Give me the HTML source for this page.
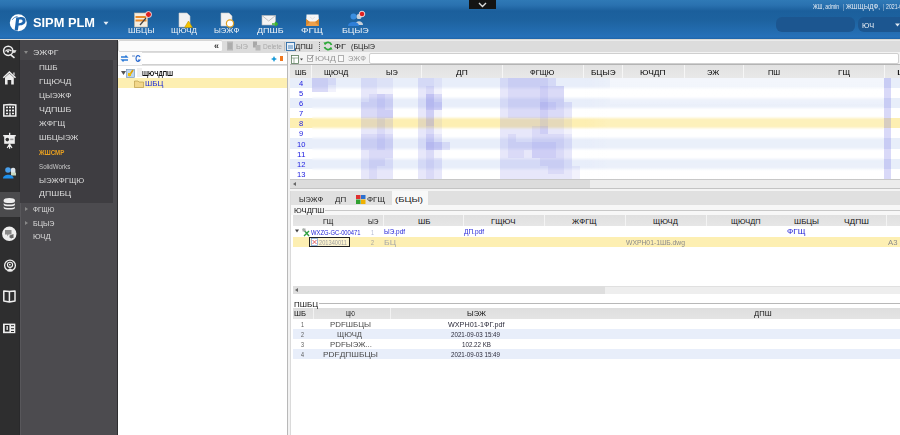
<!DOCTYPE html>
<html><head><meta charset="utf-8"><style>
html,body{margin:0;padding:0;width:900px;height:435px;overflow:hidden;background:#fff;font-family:"Liberation Sans", sans-serif;}
#root{position:relative;width:900px;height:435px;overflow:hidden;filter:blur(0.3px);}
</style></head><body><div id="root">
<div style="position:absolute;left:0px;top:0px;width:900px;height:39px;background:linear-gradient(to bottom,#2f79b6 0px,#2a72b0 5px,#1b5f9c 11px,#1d629f 20px,#226bae 30px,#2671b9 37px,#1f64a8 39px);"></div>
<div style="position:absolute;left:0px;top:39px;width:900px;height:1px;background:#dcdad4;"></div>
<div style="position:absolute;left:469px;top:0px;width:27px;height:9px;background:#141414;"></div>
<svg style="position:absolute;left:478px;top:2px" width="9" height="6" viewBox="0 0 9 6"><path d="M1 1 L4.5 4.5 L8 1" stroke="#ddd" stroke-width="1.4" fill="none"/></svg>
<svg style="position:absolute;left:9px;top:13px" width="19" height="19" viewBox="0 0 19 19"><circle cx="9.3" cy="9.7" r="8.5" fill="#fff"/><path d="M7.2 4.6 L10.4 4.2 C14 3.4 16.8 5 16.6 8 C16.4 11.2 13.4 12.6 9.6 12.4 L8.8 17.6 L5.6 17.4 Z" fill="#1f66ad"/><path d="M10.1 6.6 L9.7 10.2 C12 10.3 13.5 9.5 13.6 8.1 C13.7 6.7 12.2 6.2 10.1 6.6 Z" fill="#fff"/><path d="M3.2 6.8 C4.5 4.8 6.5 3.8 8.5 3.6" stroke="#1f66ad" stroke-width="0.8" fill="none"/></svg>
<svg style="position:absolute;left:103px;top:21px" width="6" height="5" viewBox="0 0 6 5"><path d="M0.5 0.8 L5.5 0.8 L3 4 Z" fill="#e6eef6"/></svg>
<svg style="position:absolute;left:133px;top:11px" width="20" height="17" viewBox="0 0 20 17"><rect x="1.5" y="2" width="13" height="14" fill="#f4ede0" stroke="#c9b9a0" stroke-width="0.6"/><rect x="2.5" y="5" width="11" height="2" fill="#e88a2a"/><rect x="2.5" y="8.5" width="11" height="2" fill="#e88a2a"/><path d="M7 14 L13 7" stroke="#444" stroke-width="1.2"/><circle cx="15.5" cy="3.5" r="3" fill="#e02020" stroke="#fff" stroke-width="0.8"/></svg>
<svg style="position:absolute;left:177px;top:12px" width="17" height="16" viewBox="0 0 17 16"><path d="M2 1 L10 1 L13 4 L13 15 L2 15 Z" fill="#f2f2f2" stroke="#c8c8c8" stroke-width="0.6"/><path d="M11.5 9 L15.5 15.5 L7.5 15.5 Z" fill="#f5c400" stroke="#b08a00" stroke-width="0.5"/></svg>
<svg style="position:absolute;left:220px;top:12px" width="16" height="16" viewBox="0 0 16 16"><path d="M1 1 L9 1 L12 4 L12 14 L1 14 Z" fill="#f2f2f2" stroke="#c8c8c8" stroke-width="0.6"/><circle cx="10" cy="11.5" r="3.6" fill="#fff" stroke="#e0a020" stroke-width="1.2"/></svg>
<svg style="position:absolute;left:261px;top:14px" width="17" height="13" viewBox="0 0 17 13"><rect x="1" y="1.5" width="13.5" height="9.5" fill="#f4f4f4" stroke="#bbb" stroke-width="0.6"/><path d="M1 1.5 L7.7 7 L14.5 1.5" stroke="#aaa" stroke-width="0.7" fill="none"/><path d="M11 10 L16 10 M14 8 L16.3 10 L14 12" stroke="#3cb030" stroke-width="1.6" fill="none"/></svg>
<svg style="position:absolute;left:304px;top:12px" width="17" height="15" viewBox="0 0 17 15"><path d="M2.5 2.5 L14.5 2.5 L15 10.5 L2 10.5 Z" fill="#f6f6f6"/><path d="M2 7 L5 9.5 L12 9.5 L15 7 L15 14 L2 14 Z" fill="#eea04a"/><path d="M2 7 L2 14 L6 10 Z M15 7 L15 14 L11 10 Z" fill="#d88a30"/><path d="M6 5 L8.5 7 L11 5" stroke="#ddd" stroke-width="0.8" fill="none"/></svg>
<svg style="position:absolute;left:347px;top:10px" width="20" height="17" viewBox="0 0 20 17"><circle cx="12" cy="6.5" r="2.6" fill="#c8d0d8"/><path d="M8 15 C8 10 16 10 16 15 Z" fill="#c8d0d8"/><circle cx="6.5" cy="6.5" r="3" fill="#3a8ee0"/><path d="M1 16 C1 10.5 12 10.5 12 16 Z" fill="#2f7fd8"/><circle cx="15" cy="4" r="2.8" fill="#e02020" stroke="#fff" stroke-width="0.8"/></svg>
<div style="position:absolute;left:776px;top:17px;width:79px;height:15px;background:#1c5690;border-radius:6px;"></div>
<div style="position:absolute;left:858px;top:17px;width:50px;height:15px;background:#1c5690;border-radius:6px;"></div>
<svg style="position:absolute;left:895px;top:23px" width="5" height="4" viewBox="0 0 5 4"><path d="M0 0.5 L5 0.5 L2.5 3.5 Z" fill="#dfe8f0"/></svg>
<div style="position:absolute;left:0px;top:40px;width:20px;height:395px;background:#2e2e2f;"></div>
<div style="position:absolute;left:19px;top:40px;width:1px;height:395px;background:#29292b;"></div>
<div style="position:absolute;left:0px;top:192px;width:20px;height:25px;background:#4b4b4d;"></div>
<div style="position:absolute;left:20px;top:40px;width:98px;height:395px;background:#4c4b4f;"></div>
<div style="position:absolute;left:20px;top:203px;width:1px;height:232px;background:#58575b;"></div>
<div style="position:absolute;left:20px;top:40px;width:97px;height:20px;background:#47464a;"></div>
<div style="position:absolute;left:20px;top:60px;width:93px;height:143px;background:#3e3d41;"></div>
<div style="position:absolute;left:117px;top:40px;width:1px;height:395px;background:#2e2e30;"></div>
<svg style="position:absolute;left:0px;top:42px" width="20" height="20" viewBox="0 0 20 20"><circle cx="8.2" cy="8.8" r="4.6" fill="none" stroke="#eee" stroke-width="1.5"/><path d="M5.5 9.5 C6.5 7.5 9.5 7.5 11.5 9" stroke="#eee" stroke-width="1.3" fill="none"/><circle cx="8" cy="9.6" r="1.1" fill="#eee"/><path d="M12 8 L16.5 8.2 L15.2 10.8 L12 11" fill="#ddd"/><path d="M10.8 12.8 L14.5 15.8" stroke="#eee" stroke-width="1.6"/></svg>
<svg style="position:absolute;left:0px;top:68px" width="20" height="20" viewBox="0 0 20 20"><path d="M3.3 9.8 L9.4 4 L15.5 9.8" stroke="#eee" stroke-width="1.5" fill="none"/><path d="M5 9.5 L9.4 5.6 L13.8 9.5 L13.8 16.4 L11.2 16.4 L11.2 12 L7.6 12 L7.6 16.4 L5 16.4 Z" fill="#eee"/><path d="M13.3 4.5 L14.6 4.5 L14.6 7.6 L13.3 6.5 Z" fill="#ddd"/></svg>
<svg style="position:absolute;left:0px;top:100px" width="20" height="20" viewBox="0 0 20 20"><path d="M3.8 5 L9.8 4.4 L15.8 5 L15.8 16 L3.8 16 Z" fill="none" stroke="#eee" stroke-width="1.5"/><rect x="6" y="6.6" width="2" height="1.6" fill="#eee"/><rect x="9" y="6.6" width="2" height="1.6" fill="#eee"/><rect x="12" y="6.6" width="2" height="1.6" fill="#eee"/><rect x="6" y="9.6" width="2" height="1.8" fill="#eee"/><rect x="9" y="9.6" width="2" height="1.8" fill="#eee"/><rect x="12" y="9.6" width="2" height="1.8" fill="#eee"/><rect x="6" y="12.8" width="2" height="1.4" fill="#eee"/><rect x="12" y="12.8" width="2" height="1.4" fill="#eee"/><rect x="9.3" y="12.5" width="1.4" height="3.5" fill="#eee"/></svg>
<svg style="position:absolute;left:0px;top:130px" width="20" height="20" viewBox="0 0 20 20"><rect x="9" y="2.8" width="1.3" height="2.4" fill="#eee"/><rect x="3.2" y="5" width="12.6" height="1.4" fill="#eee"/><rect x="4.2" y="6" width="10.6" height="7.8" fill="#eee"/><circle cx="7.3" cy="9.6" r="1.8" fill="#333"/><rect x="10.2" y="8.6" width="3.2" height="1.6" fill="#999"/><path d="M9.6 13.6 L9.6 18.8 M9.6 14 L7.2 18 M9.6 14 L12 18" stroke="#eee" stroke-width="1.2"/></svg>
<svg style="position:absolute;left:0px;top:162px" width="20" height="20" viewBox="0 0 20 20"><rect x="10.8" y="5.8" width="4.6" height="6" rx="2" fill="#dde4ea"/><path d="M11 10.5 L16 10.5 L16 13.5 L11 13.5 Z" fill="#c8d8c0"/><circle cx="8" cy="8" r="2.8" fill="#4aa0ec"/><path d="M3 16.5 C3 11.5 13.5 11.5 13.5 16.5 Z" fill="#1e90ec"/></svg>
<svg style="position:absolute;left:0px;top:191px" width="20" height="25" viewBox="0 0 20 25"><ellipse cx="9.3" cy="9" rx="5.6" ry="2" fill="#eee"/><path d="M3.7 9 L3.7 10.4 C3.7 12.4 14.9 12.4 14.9 10.4 L14.9 9 Z" fill="#eee"/><path d="M3.7 12 C3.7 14 14.9 14 14.9 12 L14.9 13.8 C14.9 15.8 3.7 15.8 3.7 13.8 Z" fill="#eee"/><path d="M3.7 15.4 C3.7 17.4 14.9 17.4 14.9 15.4 L14.9 17 C14.9 19 3.7 19 3.7 17 Z" fill="#eee"/></svg>
<svg style="position:absolute;left:0px;top:225px" width="20" height="20" viewBox="0 0 20 20"><circle cx="9.3" cy="8.8" r="7.2" fill="#eee"/><path d="M5 5 L11.5 5 L11.5 9.5 L8.5 9.5 L7.5 11.5 L7.2 9.5 L5 9.5 Z" fill="#8a8a8a"/><path d="M9.5 10.5 L13.5 9 L13.5 13 L11.5 13 L11.5 14 L10.5 13 L9.5 12.5 Z" fill="#666"/></svg>
<svg style="position:absolute;left:0px;top:256px" width="20" height="20" viewBox="0 0 20 20"><circle cx="10" cy="9.5" r="5.4" fill="none" stroke="#eee" stroke-width="1.3"/><circle cx="10" cy="8.8" r="2.6" fill="none" stroke="#eee" stroke-width="1.1"/><circle cx="9.8" cy="8.6" r="0.9" fill="#eee"/><path d="M7.5 15.5 C7.5 11.5 12.5 11.5 12.5 15.5 Z" fill="#eee"/></svg>
<svg style="position:absolute;left:0px;top:286px" width="20" height="20" viewBox="0 0 20 20"><path d="M3.8 5 L9.4 5.6 L9.4 16 L3.8 15 Z M15 5 L9.4 5.6 L9.4 16 L15 15 Z" fill="none" stroke="#eee" stroke-width="1.5" stroke-linejoin="round"/></svg>
<svg style="position:absolute;left:0px;top:318px" width="20" height="20" viewBox="0 0 20 20"><rect x="3" y="5.6" width="12.3" height="9.6" fill="#eee"/><rect x="4.8" y="7" width="4.6" height="6.6" fill="#2a2a2b"/><rect x="6.4" y="8" width="1.6" height="4" fill="#ccc"/><rect x="11" y="7.2" width="3" height="1" fill="#2a2a2b"/><rect x="11" y="10.2" width="3" height="1" fill="#2a2a2b"/><rect x="11" y="13" width="3" height="1" fill="#2a2a2b"/></svg>
<svg style="position:absolute;left:24px;top:51px" width="4" height="3" viewBox="0 0 4 3"><path d="M0 0 L4 0 L2 3 Z" fill="#888"/></svg>
<svg style="position:absolute;left:25px;top:207px" width="3" height="4" viewBox="0 0 3 4"><path d="M0 0 L3 2 L0 4 Z" fill="#888"/></svg>
<svg style="position:absolute;left:25px;top:221px" width="3" height="4" viewBox="0 0 3 4"><path d="M0 0 L3 2 L0 4 Z" fill="#888"/></svg>
<div style="position:absolute;left:118px;top:40px;width:170px;height:395px;background:#ffffff;"></div>
<div style="position:absolute;left:118px;top:40px;width:105px;height:12px;background:#fbfbfb;border:1px solid #d6d6d6;border-radius:2px;box-sizing:border-box;"></div>
<div style="position:absolute;left:118px;top:52px;width:170px;height:13px;background:#fbfbfb;"></div>
<svg style="position:absolute;left:120px;top:54px" width="9" height="9" viewBox="0 0 9 9"><path d="M1 3 H7 L5.5 1.5 M8 6 H2 L3.5 7.5" stroke="#2a7ad8" stroke-width="1.3" fill="none"/></svg>
<svg style="position:absolute;left:131px;top:54px" width="10" height="9" viewBox="0 0 10 9"><path d="M1 2 H4" stroke="#6a8fc8" stroke-width="1"/><path d="M9 3 C8 1 5 1 5 4.5 C5 8 8 8 9 6 L7 6" stroke="#2a6ad0" stroke-width="1.2" fill="none"/></svg>
<div style="position:absolute;left:142px;top:52px;width:145px;height:13px;background:#fff;border-top:1px solid #dcdcdc;border-bottom:1px solid #d0d0d0;box-sizing:border-box;"></div>
<svg style="position:absolute;left:271px;top:56px" width="6" height="6" viewBox="0 0 6 6"><path d="M3 0 L4 2 L6 3 L4 4 L3 6 L2 4 L0 3 L2 2 Z" fill="#1a9ad8"/></svg>
<div style="position:absolute;left:280px;top:56px;width:3px;height:5px;background:#f07820;"></div>
<div style="position:absolute;left:118px;top:65px;width:170px;height:1px;background:#e0e0e0;"></div>
<svg style="position:absolute;left:121px;top:71px" width="5" height="4" viewBox="0 0 5 4"><path d="M0 0 L5 0 L2.5 4 Z" fill="#555"/></svg>
<svg style="position:absolute;left:126px;top:68px" width="10" height="10" viewBox="0 0 10 10"><rect x="0.5" y="1.5" width="8" height="8" fill="#bcd4ec" stroke="#6a8cb0" stroke-width="0.6"/><path d="M3 8 L7 2" stroke="#e0a000" stroke-width="1.6"/><rect x="2" y="5" width="3" height="3" fill="#f0c000"/></svg>
<div style="position:absolute;left:137px;top:68px;width:5px;height:9px;background:#f0f0f0;"></div>
<div style="position:absolute;left:118px;top:78px;width:170px;height:10px;background:#fdefb2;"></div>
<svg style="position:absolute;left:134px;top:79px" width="10" height="9" viewBox="0 0 10 9"><path d="M0.5 2 L4 2 L5 3 L9.5 3 L9.5 8.5 L0.5 8.5 Z" fill="#f2d78a" stroke="#b0903a" stroke-width="0.6"/></svg>
<div style="position:absolute;left:287px;top:40px;width:1px;height:395px;background:#b8b8b8;"></div>
<div style="position:absolute;left:288px;top:40px;width:2px;height:395px;background:#f2f2f2;"></div>
<div style="position:absolute;left:222px;top:40px;width:678px;height:12px;background:#dcdcdc;border-top:1px solid #ebebeb;box-sizing:border-box;"></div>
<svg style="position:absolute;left:226px;top:41px" width="8" height="10" viewBox="0 0 8 10"><rect x="1" y="0.5" width="6" height="9" fill="#b8b8b8"/><path d="M2 3 H6 M2 5 H6 M2 7 H6" stroke="#9a9a9a" stroke-width="0.7"/></svg>
<svg style="position:absolute;left:252px;top:41px" width="9" height="10" viewBox="0 0 9 10"><rect x="1" y="0.5" width="4" height="6" fill="#a8a8a8"/><rect x="3.5" y="4" width="5" height="5.5" fill="#b8b8b8"/></svg>
<div style="position:absolute;left:284px;top:42px;width:1px;height:9px;background:#bfbfbf;"></div>
<svg style="position:absolute;left:286px;top:42px" width="9" height="9" viewBox="0 0 9 9"><rect x="0.5" y="0.5" width="8" height="8" fill="#e8f0f8" stroke="#2a6aa8" stroke-width="0.9"/><path d="M2 4 H7 M2 6 H7" stroke="#2a6aa8" stroke-width="0.8"/></svg>
<div style="position:absolute;left:319px;top:42px;width:1px;height:1px;background:#666;"></div>
<div style="position:absolute;left:319px;top:44px;width:1px;height:1px;background:#666;"></div>
<div style="position:absolute;left:319px;top:46px;width:1px;height:1px;background:#666;"></div>
<div style="position:absolute;left:319px;top:48px;width:1px;height:1px;background:#666;"></div>
<div style="position:absolute;left:319px;top:50px;width:1px;height:1px;background:#666;"></div>
<svg style="position:absolute;left:323px;top:41px" width="10" height="10" viewBox="0 0 10 10"><path d="M8.5 4 A3.8 3.8 0 0 0 1.8 3" stroke="#2ea83a" stroke-width="1.8" fill="none"/><path d="M1.5 6 A3.8 3.8 0 0 0 8.2 7" stroke="#2ea83a" stroke-width="1.8" fill="none"/><path d="M0.5 1 L1.8 4 L4 2.5 Z M9.5 9 L8.2 6 L6 7.5 Z" fill="#2ea83a"/></svg>
<div style="position:absolute;left:290px;top:52px;width:610px;height:13px;background:#f3f3f3;"></div>
<svg style="position:absolute;left:291px;top:55px" width="13" height="9" viewBox="0 0 13 9"><rect x="0.5" y="0.5" width="7" height="8" fill="#fff" stroke="#5a7a5a" stroke-width="0.8"/><path d="M0.5 3 H7.5 M3 3 V8.5" stroke="#5a7a5a" stroke-width="0.6"/><path d="M9 3.5 L12 3.5 L10.5 5.5 Z" fill="#444"/></svg>
<div style="position:absolute;left:307px;top:55px;width:6px;height:7px;background:#fafafa;border:1px solid #b0b0b0;box-sizing:border-box;"></div>
<svg style="position:absolute;left:307px;top:54px" width="7" height="7" viewBox="0 0 7 7"><path d="M1 3.5 L3 5.5 L6.5 1" stroke="#888" stroke-width="0.9" fill="none"/></svg>
<div style="position:absolute;left:338px;top:55px;width:6px;height:7px;background:#fafafa;border:1px solid #b0b0b0;box-sizing:border-box;"></div>
<div style="position:absolute;left:369px;top:53px;width:530px;height:11px;background:#fff;border:1px solid #cfcfcf;border-radius:2px;box-sizing:border-box;"></div>
<div style="position:absolute;left:290px;top:64px;width:610px;height:1px;background:#b4b4b4;"></div>
<div style="position:absolute;left:290px;top:65px;width:610px;height:13px;background:linear-gradient(to bottom,#e2e2e2,#e8e8e8);"></div>
<div style="position:absolute;left:311px;top:65px;width:1px;height:13px;background:#f6f6f6;"></div>
<div style="position:absolute;left:421px;top:65px;width:1px;height:13px;background:#f6f6f6;"></div>
<div style="position:absolute;left:502px;top:65px;width:1px;height:13px;background:#f6f6f6;"></div>
<div style="position:absolute;left:583px;top:65px;width:1px;height:13px;background:#f6f6f6;"></div>
<div style="position:absolute;left:622px;top:65px;width:1px;height:13px;background:#f6f6f6;"></div>
<div style="position:absolute;left:684px;top:65px;width:1px;height:13px;background:#f6f6f6;"></div>
<div style="position:absolute;left:743px;top:65px;width:1px;height:13px;background:#f6f6f6;"></div>
<div style="position:absolute;left:884px;top:65px;width:1px;height:13px;background:#f6f6f6;"></div>
<div style="position:absolute;left:290px;top:78px;width:610px;height:10px;background:#e8eefa;"></div>
<div style="position:absolute;left:290px;top:88px;width:610px;height:10px;background:#ffffff;"></div>
<div style="position:absolute;left:290px;top:98px;width:610px;height:10px;background:#e8eefa;"></div>
<div style="position:absolute;left:290px;top:108px;width:610px;height:10px;background:#ffffff;"></div>
<div style="position:absolute;left:290px;top:118px;width:610px;height:10px;background:#fdefb2;"></div>
<div style="position:absolute;left:290px;top:128px;width:610px;height:10px;background:#ffffff;"></div>
<div style="position:absolute;left:290px;top:138px;width:610px;height:11px;background:#e8eefa;"></div>
<div style="position:absolute;left:290px;top:149px;width:610px;height:10px;background:#ffffff;"></div>
<div style="position:absolute;left:290px;top:159px;width:610px;height:10px;background:#e8eefa;"></div>
<div style="position:absolute;left:290px;top:169px;width:610px;height:10px;background:#ffffff;"></div>
<div style="position:absolute;left:312px;top:78px;width:572px;height:101px;backdrop-filter:blur(1.2px);-webkit-backdrop-filter:blur(1.2px);"></div>
<div style="position:absolute;left:610px;top:78px;width:274px;height:101px;background:linear-gradient(to bottom,rgba(255,255,255,.5) 0px,rgba(255,255,255,.4) 18px,rgba(255,255,255,.12) 28px,rgba(255,255,255,.12) 85px,rgba(255,255,255,.3) 101px);"></div>
<div style="position:absolute;left:585px;top:78px;width:25px;height:101px;background:linear-gradient(to right,rgba(255,255,255,0),rgba(255,255,255,.15));"></div>
<div style="position:absolute;left:312px;top:78px;width:8px;height:7px;background:rgba(110,110,225,0.255);"></div>
<div style="position:absolute;left:320px;top:78px;width:8px;height:7px;background:rgba(110,110,225,0.255);"></div>
<div style="position:absolute;left:328px;top:78px;width:8px;height:7px;background:rgba(110,110,225,0.170);"></div>
<div style="position:absolute;left:312px;top:85px;width:8px;height:7px;background:rgba(110,110,225,0.255);"></div>
<div style="position:absolute;left:320px;top:85px;width:8px;height:7px;background:rgba(110,110,225,0.255);"></div>
<div style="position:absolute;left:328px;top:85px;width:8px;height:7px;background:rgba(110,110,225,0.085);"></div>
<div style="position:absolute;left:361px;top:78px;width:8px;height:8px;background:rgba(110,110,225,0.170);"></div>
<div style="position:absolute;left:369px;top:78px;width:8px;height:8px;background:rgba(110,110,225,0.170);"></div>
<div style="position:absolute;left:377px;top:78px;width:8px;height:8px;background:rgba(110,110,225,0.085);"></div>
<div style="position:absolute;left:385px;top:78px;width:8px;height:8px;background:rgba(110,110,225,0.085);"></div>
<div style="position:absolute;left:361px;top:86px;width:8px;height:8px;background:rgba(110,110,225,0.170);"></div>
<div style="position:absolute;left:369px;top:86px;width:8px;height:8px;background:rgba(110,110,225,0.170);"></div>
<div style="position:absolute;left:377px;top:86px;width:8px;height:8px;background:rgba(110,110,225,0.085);"></div>
<div style="position:absolute;left:385px;top:86px;width:8px;height:8px;background:rgba(110,110,225,0.085);"></div>
<div style="position:absolute;left:361px;top:94px;width:8px;height:8px;background:rgba(110,110,225,0.170);"></div>
<div style="position:absolute;left:369px;top:94px;width:8px;height:8px;background:rgba(110,110,225,0.255);"></div>
<div style="position:absolute;left:377px;top:94px;width:8px;height:8px;background:rgba(110,110,225,0.340);"></div>
<div style="position:absolute;left:385px;top:94px;width:8px;height:8px;background:rgba(110,110,225,0.255);"></div>
<div style="position:absolute;left:361px;top:102px;width:8px;height:8px;background:rgba(110,110,225,0.255);"></div>
<div style="position:absolute;left:369px;top:102px;width:8px;height:8px;background:rgba(110,110,225,0.255);"></div>
<div style="position:absolute;left:377px;top:102px;width:8px;height:8px;background:rgba(110,110,225,0.340);"></div>
<div style="position:absolute;left:385px;top:102px;width:8px;height:8px;background:rgba(110,110,225,0.255);"></div>
<div style="position:absolute;left:361px;top:110px;width:8px;height:8px;background:rgba(110,110,225,0.255);"></div>
<div style="position:absolute;left:369px;top:110px;width:8px;height:8px;background:rgba(110,110,225,0.255);"></div>
<div style="position:absolute;left:377px;top:110px;width:8px;height:8px;background:rgba(110,110,225,0.340);"></div>
<div style="position:absolute;left:385px;top:110px;width:8px;height:8px;background:rgba(110,110,225,0.340);"></div>
<div style="position:absolute;left:361px;top:118px;width:8px;height:8px;background:rgba(110,110,225,0.170);"></div>
<div style="position:absolute;left:369px;top:118px;width:8px;height:8px;background:rgba(110,110,225,0.170);"></div>
<div style="position:absolute;left:377px;top:118px;width:8px;height:8px;background:rgba(110,110,225,0.255);"></div>
<div style="position:absolute;left:385px;top:118px;width:8px;height:8px;background:rgba(110,110,225,0.170);"></div>
<div style="position:absolute;left:361px;top:126px;width:8px;height:8px;background:rgba(110,110,225,0.170);"></div>
<div style="position:absolute;left:369px;top:126px;width:8px;height:8px;background:rgba(110,110,225,0.170);"></div>
<div style="position:absolute;left:377px;top:126px;width:8px;height:8px;background:rgba(110,110,225,0.255);"></div>
<div style="position:absolute;left:385px;top:126px;width:8px;height:8px;background:rgba(110,110,225,0.170);"></div>
<div style="position:absolute;left:361px;top:134px;width:8px;height:8px;background:rgba(110,110,225,0.255);"></div>
<div style="position:absolute;left:369px;top:134px;width:8px;height:8px;background:rgba(110,110,225,0.255);"></div>
<div style="position:absolute;left:377px;top:134px;width:8px;height:8px;background:rgba(110,110,225,0.340);"></div>
<div style="position:absolute;left:385px;top:134px;width:8px;height:8px;background:rgba(110,110,225,0.255);"></div>
<div style="position:absolute;left:361px;top:142px;width:8px;height:8px;background:rgba(110,110,225,0.255);"></div>
<div style="position:absolute;left:369px;top:142px;width:8px;height:8px;background:rgba(110,110,225,0.255);"></div>
<div style="position:absolute;left:377px;top:142px;width:8px;height:8px;background:rgba(110,110,225,0.340);"></div>
<div style="position:absolute;left:385px;top:142px;width:8px;height:8px;background:rgba(110,110,225,0.255);"></div>
<div style="position:absolute;left:361px;top:150px;width:8px;height:8px;background:rgba(110,110,225,0.170);"></div>
<div style="position:absolute;left:369px;top:150px;width:8px;height:8px;background:rgba(110,110,225,0.255);"></div>
<div style="position:absolute;left:377px;top:150px;width:8px;height:8px;background:rgba(110,110,225,0.255);"></div>
<div style="position:absolute;left:385px;top:150px;width:8px;height:8px;background:rgba(110,110,225,0.255);"></div>
<div style="position:absolute;left:361px;top:158px;width:8px;height:8px;background:rgba(110,110,225,0.170);"></div>
<div style="position:absolute;left:369px;top:158px;width:8px;height:8px;background:rgba(110,110,225,0.255);"></div>
<div style="position:absolute;left:377px;top:158px;width:8px;height:8px;background:rgba(110,110,225,0.255);"></div>
<div style="position:absolute;left:385px;top:158px;width:8px;height:8px;background:rgba(110,110,225,0.170);"></div>
<div style="position:absolute;left:361px;top:166px;width:8px;height:8px;background:rgba(110,110,225,0.170);"></div>
<div style="position:absolute;left:369px;top:166px;width:8px;height:8px;background:rgba(110,110,225,0.255);"></div>
<div style="position:absolute;left:377px;top:166px;width:8px;height:8px;background:rgba(110,110,225,0.170);"></div>
<div style="position:absolute;left:385px;top:166px;width:8px;height:8px;background:rgba(110,110,225,0.170);"></div>
<div style="position:absolute;left:361px;top:174px;width:8px;height:5px;background:rgba(110,110,225,0.170);"></div>
<div style="position:absolute;left:369px;top:174px;width:8px;height:5px;background:rgba(110,110,225,0.255);"></div>
<div style="position:absolute;left:377px;top:174px;width:8px;height:5px;background:rgba(110,110,225,0.170);"></div>
<div style="position:absolute;left:385px;top:174px;width:8px;height:5px;background:rgba(110,110,225,0.170);"></div>
<div style="position:absolute;left:418px;top:78px;width:8px;height:8px;background:rgba(110,110,225,0.170);"></div>
<div style="position:absolute;left:426px;top:78px;width:8px;height:8px;background:rgba(110,110,225,0.170);"></div>
<div style="position:absolute;left:434px;top:78px;width:8px;height:8px;background:rgba(110,110,225,0.085);"></div>
<div style="position:absolute;left:418px;top:86px;width:8px;height:8px;background:rgba(110,110,225,0.170);"></div>
<div style="position:absolute;left:426px;top:86px;width:8px;height:8px;background:rgba(110,110,225,0.255);"></div>
<div style="position:absolute;left:434px;top:86px;width:8px;height:8px;background:rgba(110,110,225,0.085);"></div>
<div style="position:absolute;left:418px;top:94px;width:8px;height:8px;background:rgba(110,110,225,0.170);"></div>
<div style="position:absolute;left:426px;top:94px;width:8px;height:8px;background:rgba(110,110,225,0.425);"></div>
<div style="position:absolute;left:434px;top:94px;width:8px;height:8px;background:rgba(110,110,225,0.255);"></div>
<div style="position:absolute;left:418px;top:102px;width:8px;height:8px;background:rgba(110,110,225,0.170);"></div>
<div style="position:absolute;left:426px;top:102px;width:8px;height:8px;background:rgba(110,110,225,0.425);"></div>
<div style="position:absolute;left:434px;top:102px;width:8px;height:8px;background:rgba(110,110,225,0.340);"></div>
<div style="position:absolute;left:418px;top:110px;width:8px;height:8px;background:rgba(110,110,225,0.170);"></div>
<div style="position:absolute;left:426px;top:110px;width:8px;height:8px;background:rgba(110,110,225,0.340);"></div>
<div style="position:absolute;left:434px;top:110px;width:8px;height:8px;background:rgba(110,110,225,0.085);"></div>
<div style="position:absolute;left:418px;top:118px;width:8px;height:8px;background:rgba(110,110,225,0.170);"></div>
<div style="position:absolute;left:426px;top:118px;width:8px;height:8px;background:rgba(110,110,225,0.340);"></div>
<div style="position:absolute;left:434px;top:118px;width:8px;height:8px;background:rgba(110,110,225,0.085);"></div>
<div style="position:absolute;left:418px;top:126px;width:8px;height:8px;background:rgba(110,110,225,0.170);"></div>
<div style="position:absolute;left:426px;top:126px;width:8px;height:8px;background:rgba(110,110,225,0.255);"></div>
<div style="position:absolute;left:434px;top:126px;width:8px;height:8px;background:rgba(110,110,225,0.085);"></div>
<div style="position:absolute;left:418px;top:134px;width:8px;height:8px;background:rgba(110,110,225,0.170);"></div>
<div style="position:absolute;left:426px;top:134px;width:8px;height:8px;background:rgba(110,110,225,0.340);"></div>
<div style="position:absolute;left:434px;top:134px;width:8px;height:8px;background:rgba(110,110,225,0.170);"></div>
<div style="position:absolute;left:418px;top:142px;width:8px;height:8px;background:rgba(110,110,225,0.170);"></div>
<div style="position:absolute;left:426px;top:142px;width:8px;height:8px;background:rgba(110,110,225,0.425);"></div>
<div style="position:absolute;left:434px;top:142px;width:8px;height:8px;background:rgba(110,110,225,0.340);"></div>
<div style="position:absolute;left:442px;top:142px;width:8px;height:8px;background:rgba(110,110,225,0.170);"></div>
<div style="position:absolute;left:418px;top:150px;width:8px;height:8px;background:rgba(110,110,225,0.170);"></div>
<div style="position:absolute;left:426px;top:150px;width:8px;height:8px;background:rgba(110,110,225,0.255);"></div>
<div style="position:absolute;left:434px;top:150px;width:8px;height:8px;background:rgba(110,110,225,0.085);"></div>
<div style="position:absolute;left:418px;top:158px;width:8px;height:8px;background:rgba(110,110,225,0.170);"></div>
<div style="position:absolute;left:426px;top:158px;width:8px;height:8px;background:rgba(110,110,225,0.255);"></div>
<div style="position:absolute;left:434px;top:158px;width:8px;height:8px;background:rgba(110,110,225,0.170);"></div>
<div style="position:absolute;left:418px;top:166px;width:8px;height:8px;background:rgba(110,110,225,0.170);"></div>
<div style="position:absolute;left:426px;top:166px;width:8px;height:8px;background:rgba(110,110,225,0.255);"></div>
<div style="position:absolute;left:434px;top:166px;width:8px;height:8px;background:rgba(110,110,225,0.170);"></div>
<div style="position:absolute;left:418px;top:174px;width:8px;height:5px;background:rgba(110,110,225,0.170);"></div>
<div style="position:absolute;left:426px;top:174px;width:8px;height:5px;background:rgba(110,110,225,0.255);"></div>
<div style="position:absolute;left:434px;top:174px;width:8px;height:5px;background:rgba(110,110,225,0.170);"></div>
<div style="position:absolute;left:500px;top:78px;width:8px;height:8px;background:rgba(110,110,225,0.170);"></div>
<div style="position:absolute;left:508px;top:78px;width:8px;height:8px;background:rgba(110,110,225,0.255);"></div>
<div style="position:absolute;left:516px;top:78px;width:8px;height:8px;background:rgba(110,110,225,0.255);"></div>
<div style="position:absolute;left:524px;top:78px;width:8px;height:8px;background:rgba(110,110,225,0.255);"></div>
<div style="position:absolute;left:532px;top:78px;width:8px;height:8px;background:rgba(110,110,225,0.255);"></div>
<div style="position:absolute;left:540px;top:78px;width:8px;height:8px;background:rgba(110,110,225,0.255);"></div>
<div style="position:absolute;left:548px;top:78px;width:8px;height:8px;background:rgba(110,110,225,0.170);"></div>
<div style="position:absolute;left:500px;top:86px;width:8px;height:8px;background:rgba(110,110,225,0.170);"></div>
<div style="position:absolute;left:508px;top:86px;width:8px;height:8px;background:rgba(110,110,225,0.255);"></div>
<div style="position:absolute;left:516px;top:86px;width:8px;height:8px;background:rgba(110,110,225,0.255);"></div>
<div style="position:absolute;left:524px;top:86px;width:8px;height:8px;background:rgba(110,110,225,0.255);"></div>
<div style="position:absolute;left:532px;top:86px;width:8px;height:8px;background:rgba(110,110,225,0.255);"></div>
<div style="position:absolute;left:540px;top:86px;width:8px;height:8px;background:rgba(110,110,225,0.340);"></div>
<div style="position:absolute;left:548px;top:86px;width:8px;height:8px;background:rgba(110,110,225,0.255);"></div>
<div style="position:absolute;left:556px;top:86px;width:8px;height:8px;background:rgba(110,110,225,0.255);"></div>
<div style="position:absolute;left:500px;top:94px;width:8px;height:8px;background:rgba(110,110,225,0.170);"></div>
<div style="position:absolute;left:508px;top:94px;width:8px;height:8px;background:rgba(110,110,225,0.255);"></div>
<div style="position:absolute;left:516px;top:94px;width:8px;height:8px;background:rgba(110,110,225,0.255);"></div>
<div style="position:absolute;left:524px;top:94px;width:8px;height:8px;background:rgba(110,110,225,0.255);"></div>
<div style="position:absolute;left:532px;top:94px;width:8px;height:8px;background:rgba(110,110,225,0.255);"></div>
<div style="position:absolute;left:540px;top:94px;width:8px;height:8px;background:rgba(110,110,225,0.340);"></div>
<div style="position:absolute;left:548px;top:94px;width:8px;height:8px;background:rgba(110,110,225,0.255);"></div>
<div style="position:absolute;left:556px;top:94px;width:8px;height:8px;background:rgba(110,110,225,0.255);"></div>
<div style="position:absolute;left:500px;top:102px;width:8px;height:8px;background:rgba(110,110,225,0.170);"></div>
<div style="position:absolute;left:508px;top:102px;width:8px;height:8px;background:rgba(110,110,225,0.255);"></div>
<div style="position:absolute;left:516px;top:102px;width:8px;height:8px;background:rgba(110,110,225,0.255);"></div>
<div style="position:absolute;left:524px;top:102px;width:8px;height:8px;background:rgba(110,110,225,0.255);"></div>
<div style="position:absolute;left:532px;top:102px;width:8px;height:8px;background:rgba(110,110,225,0.255);"></div>
<div style="position:absolute;left:540px;top:102px;width:8px;height:8px;background:rgba(110,110,225,0.425);"></div>
<div style="position:absolute;left:548px;top:102px;width:8px;height:8px;background:rgba(110,110,225,0.340);"></div>
<div style="position:absolute;left:556px;top:102px;width:8px;height:8px;background:rgba(110,110,225,0.255);"></div>
<div style="position:absolute;left:564px;top:102px;width:8px;height:8px;background:rgba(110,110,225,0.170);"></div>
<div style="position:absolute;left:500px;top:110px;width:8px;height:8px;background:rgba(110,110,225,0.170);"></div>
<div style="position:absolute;left:508px;top:110px;width:8px;height:8px;background:rgba(110,110,225,0.255);"></div>
<div style="position:absolute;left:516px;top:110px;width:8px;height:8px;background:rgba(110,110,225,0.255);"></div>
<div style="position:absolute;left:524px;top:110px;width:8px;height:8px;background:rgba(110,110,225,0.255);"></div>
<div style="position:absolute;left:532px;top:110px;width:8px;height:8px;background:rgba(110,110,225,0.255);"></div>
<div style="position:absolute;left:540px;top:110px;width:8px;height:8px;background:rgba(110,110,225,0.340);"></div>
<div style="position:absolute;left:548px;top:110px;width:8px;height:8px;background:rgba(110,110,225,0.255);"></div>
<div style="position:absolute;left:556px;top:110px;width:8px;height:8px;background:rgba(110,110,225,0.255);"></div>
<div style="position:absolute;left:564px;top:110px;width:8px;height:8px;background:rgba(110,110,225,0.170);"></div>
<div style="position:absolute;left:500px;top:118px;width:8px;height:8px;background:rgba(110,110,225,0.170);"></div>
<div style="position:absolute;left:508px;top:118px;width:8px;height:8px;background:rgba(110,110,225,0.170);"></div>
<div style="position:absolute;left:516px;top:118px;width:8px;height:8px;background:rgba(110,110,225,0.170);"></div>
<div style="position:absolute;left:524px;top:118px;width:8px;height:8px;background:rgba(110,110,225,0.170);"></div>
<div style="position:absolute;left:532px;top:118px;width:8px;height:8px;background:rgba(110,110,225,0.170);"></div>
<div style="position:absolute;left:540px;top:118px;width:8px;height:8px;background:rgba(110,110,225,0.255);"></div>
<div style="position:absolute;left:548px;top:118px;width:8px;height:8px;background:rgba(110,110,225,0.170);"></div>
<div style="position:absolute;left:556px;top:118px;width:8px;height:8px;background:rgba(110,110,225,0.170);"></div>
<div style="position:absolute;left:564px;top:118px;width:8px;height:8px;background:rgba(110,110,225,0.085);"></div>
<div style="position:absolute;left:500px;top:126px;width:8px;height:8px;background:rgba(110,110,225,0.170);"></div>
<div style="position:absolute;left:508px;top:126px;width:8px;height:8px;background:rgba(110,110,225,0.170);"></div>
<div style="position:absolute;left:516px;top:126px;width:8px;height:8px;background:rgba(110,110,225,0.170);"></div>
<div style="position:absolute;left:524px;top:126px;width:8px;height:8px;background:rgba(110,110,225,0.170);"></div>
<div style="position:absolute;left:532px;top:126px;width:8px;height:8px;background:rgba(110,110,225,0.255);"></div>
<div style="position:absolute;left:540px;top:126px;width:8px;height:8px;background:rgba(110,110,225,0.340);"></div>
<div style="position:absolute;left:548px;top:126px;width:8px;height:8px;background:rgba(110,110,225,0.170);"></div>
<div style="position:absolute;left:556px;top:126px;width:8px;height:8px;background:rgba(110,110,225,0.170);"></div>
<div style="position:absolute;left:564px;top:126px;width:8px;height:8px;background:rgba(110,110,225,0.085);"></div>
<div style="position:absolute;left:500px;top:134px;width:8px;height:8px;background:rgba(110,110,225,0.170);"></div>
<div style="position:absolute;left:508px;top:134px;width:8px;height:8px;background:rgba(110,110,225,0.255);"></div>
<div style="position:absolute;left:516px;top:134px;width:8px;height:8px;background:rgba(110,110,225,0.170);"></div>
<div style="position:absolute;left:524px;top:134px;width:8px;height:8px;background:rgba(110,110,225,0.170);"></div>
<div style="position:absolute;left:532px;top:134px;width:8px;height:8px;background:rgba(110,110,225,0.255);"></div>
<div style="position:absolute;left:540px;top:134px;width:8px;height:8px;background:rgba(110,110,225,0.255);"></div>
<div style="position:absolute;left:548px;top:134px;width:8px;height:8px;background:rgba(110,110,225,0.255);"></div>
<div style="position:absolute;left:556px;top:134px;width:8px;height:8px;background:rgba(110,110,225,0.255);"></div>
<div style="position:absolute;left:564px;top:134px;width:8px;height:8px;background:rgba(110,110,225,0.170);"></div>
<div style="position:absolute;left:500px;top:142px;width:8px;height:8px;background:rgba(110,110,225,0.170);"></div>
<div style="position:absolute;left:508px;top:142px;width:8px;height:8px;background:rgba(110,110,225,0.255);"></div>
<div style="position:absolute;left:516px;top:142px;width:8px;height:8px;background:rgba(110,110,225,0.255);"></div>
<div style="position:absolute;left:524px;top:142px;width:8px;height:8px;background:rgba(110,110,225,0.255);"></div>
<div style="position:absolute;left:532px;top:142px;width:8px;height:8px;background:rgba(110,110,225,0.340);"></div>
<div style="position:absolute;left:540px;top:142px;width:8px;height:8px;background:rgba(110,110,225,0.340);"></div>
<div style="position:absolute;left:548px;top:142px;width:8px;height:8px;background:rgba(110,110,225,0.340);"></div>
<div style="position:absolute;left:556px;top:142px;width:8px;height:8px;background:rgba(110,110,225,0.255);"></div>
<div style="position:absolute;left:564px;top:142px;width:8px;height:8px;background:rgba(110,110,225,0.170);"></div>
<div style="position:absolute;left:500px;top:150px;width:8px;height:8px;background:rgba(110,110,225,0.170);"></div>
<div style="position:absolute;left:508px;top:150px;width:8px;height:8px;background:rgba(110,110,225,0.255);"></div>
<div style="position:absolute;left:516px;top:150px;width:8px;height:8px;background:rgba(110,110,225,0.255);"></div>
<div style="position:absolute;left:524px;top:150px;width:8px;height:8px;background:rgba(110,110,225,0.170);"></div>
<div style="position:absolute;left:532px;top:150px;width:8px;height:8px;background:rgba(110,110,225,0.340);"></div>
<div style="position:absolute;left:540px;top:150px;width:8px;height:8px;background:rgba(110,110,225,0.340);"></div>
<div style="position:absolute;left:548px;top:150px;width:8px;height:8px;background:rgba(110,110,225,0.340);"></div>
<div style="position:absolute;left:556px;top:150px;width:8px;height:8px;background:rgba(110,110,225,0.255);"></div>
<div style="position:absolute;left:564px;top:150px;width:8px;height:8px;background:rgba(110,110,225,0.170);"></div>
<div style="position:absolute;left:500px;top:158px;width:8px;height:8px;background:rgba(110,110,225,0.170);"></div>
<div style="position:absolute;left:508px;top:158px;width:8px;height:8px;background:rgba(110,110,225,0.170);"></div>
<div style="position:absolute;left:516px;top:158px;width:8px;height:8px;background:rgba(110,110,225,0.170);"></div>
<div style="position:absolute;left:524px;top:158px;width:8px;height:8px;background:rgba(110,110,225,0.170);"></div>
<div style="position:absolute;left:532px;top:158px;width:8px;height:8px;background:rgba(110,110,225,0.170);"></div>
<div style="position:absolute;left:540px;top:158px;width:8px;height:8px;background:rgba(110,110,225,0.255);"></div>
<div style="position:absolute;left:548px;top:158px;width:8px;height:8px;background:rgba(110,110,225,0.255);"></div>
<div style="position:absolute;left:556px;top:158px;width:8px;height:8px;background:rgba(110,110,225,0.255);"></div>
<div style="position:absolute;left:564px;top:158px;width:8px;height:8px;background:rgba(110,110,225,0.170);"></div>
<div style="position:absolute;left:500px;top:166px;width:8px;height:8px;background:rgba(110,110,225,0.170);"></div>
<div style="position:absolute;left:508px;top:166px;width:8px;height:8px;background:rgba(110,110,225,0.170);"></div>
<div style="position:absolute;left:516px;top:166px;width:8px;height:8px;background:rgba(110,110,225,0.170);"></div>
<div style="position:absolute;left:524px;top:166px;width:8px;height:8px;background:rgba(110,110,225,0.170);"></div>
<div style="position:absolute;left:532px;top:166px;width:8px;height:8px;background:rgba(110,110,225,0.170);"></div>
<div style="position:absolute;left:540px;top:166px;width:8px;height:8px;background:rgba(110,110,225,0.170);"></div>
<div style="position:absolute;left:548px;top:166px;width:8px;height:8px;background:rgba(110,110,225,0.255);"></div>
<div style="position:absolute;left:556px;top:166px;width:8px;height:8px;background:rgba(110,110,225,0.255);"></div>
<div style="position:absolute;left:564px;top:166px;width:8px;height:8px;background:rgba(110,110,225,0.170);"></div>
<div style="position:absolute;left:572px;top:166px;width:8px;height:8px;background:rgba(110,110,225,0.085);"></div>
<div style="position:absolute;left:500px;top:174px;width:8px;height:5px;background:rgba(110,110,225,0.170);"></div>
<div style="position:absolute;left:508px;top:174px;width:8px;height:5px;background:rgba(110,110,225,0.170);"></div>
<div style="position:absolute;left:516px;top:174px;width:8px;height:5px;background:rgba(110,110,225,0.170);"></div>
<div style="position:absolute;left:524px;top:174px;width:8px;height:5px;background:rgba(110,110,225,0.170);"></div>
<div style="position:absolute;left:532px;top:174px;width:8px;height:5px;background:rgba(110,110,225,0.170);"></div>
<div style="position:absolute;left:540px;top:174px;width:8px;height:5px;background:rgba(110,110,225,0.170);"></div>
<div style="position:absolute;left:548px;top:174px;width:8px;height:5px;background:rgba(110,110,225,0.170);"></div>
<div style="position:absolute;left:556px;top:174px;width:8px;height:5px;background:rgba(110,110,225,0.170);"></div>
<div style="position:absolute;left:564px;top:174px;width:8px;height:5px;background:rgba(110,110,225,0.170);"></div>
<div style="position:absolute;left:572px;top:174px;width:8px;height:5px;background:rgba(110,110,225,0.085);"></div>
<div style="position:absolute;left:884px;top:78px;width:7px;height:101px;background:rgba(120,120,230,0.28);"></div>
<div style="position:absolute;left:290px;top:179px;width:610px;height:9px;background:#dcdcdc;border-top:1px solid #c8c8c8;box-sizing:border-box;"></div>
<svg style="position:absolute;left:293px;top:182px" width="3" height="4" viewBox="0 0 3 4"><path d="M3 0 L0 2 L3 4 Z" fill="#666"/></svg>
<div style="position:absolute;left:290px;top:188px;width:610px;height:1px;background:#c4c4c4;"></div>
<div style="position:absolute;left:590px;top:180px;width:310px;height:8px;background:#ececec;"></div>
<div style="position:absolute;left:290px;top:189px;width:610px;height:2px;background:#f4f4f4;"></div>
<div style="position:absolute;left:290px;top:191px;width:610px;height:14px;background:#e0e0e0;"></div>
<div style="position:absolute;left:392px;top:191px;width:36px;height:14px;background:#f8f8f8;"></div>
<svg style="position:absolute;left:356px;top:195px" width="10" height="9" viewBox="0 0 10 9"><rect x="0" y="0" width="4.5" height="4" fill="#e03030"/><rect x="5" y="0" width="4.5" height="4" fill="#2a70d0"/><rect x="0" y="4.5" width="4.5" height="4.5" fill="#30a030"/><rect x="5" y="4.5" width="4.5" height="4.5" fill="#f0b000"/></svg>
<div style="position:absolute;left:290px;top:205px;width:610px;height:10px;background:#f7f7f7;"></div>
<div style="position:absolute;left:325px;top:210px;width:575px;height:1px;background:#c8c8c8;"></div>
<div style="position:absolute;left:290px;top:191px;width:1px;height:244px;background:#dadada;"></div>
<div style="position:absolute;left:293px;top:215px;width:607px;height:11px;background:linear-gradient(to bottom,#e0e0e0,#e6e6e6);"></div>
<div style="position:absolute;left:383px;top:215px;width:1px;height:11px;background:#f4f4f4;"></div>
<div style="position:absolute;left:463px;top:215px;width:1px;height:11px;background:#f4f4f4;"></div>
<div style="position:absolute;left:544px;top:215px;width:1px;height:11px;background:#f4f4f4;"></div>
<div style="position:absolute;left:625px;top:215px;width:1px;height:11px;background:#f4f4f4;"></div>
<div style="position:absolute;left:706px;top:215px;width:1px;height:11px;background:#f4f4f4;"></div>
<div style="position:absolute;left:886px;top:215px;width:1px;height:11px;background:#f4f4f4;"></div>
<div style="position:absolute;left:293px;top:226px;width:607px;height:11px;background:#ffffff;"></div>
<svg style="position:absolute;left:295px;top:229px" width="4" height="4" viewBox="0 0 4 4"><path d="M0 0.5 L4 0.5 L2 3.5 Z" fill="#444"/></svg>
<svg style="position:absolute;left:302px;top:228px" width="8" height="9" viewBox="0 0 8 9"><path d="M1 1 L7 8 M7 3 L2 8" stroke="#30a040" stroke-width="1.4"/><rect x="0.5" y="0.5" width="3" height="3" fill="#aaa"/></svg>
<div style="position:absolute;left:293px;top:237px;width:607px;height:10px;background:#fdefb2;"></div>
<div style="position:absolute;left:308.5px;top:237px;width:41px;height:10px;background:#fdf4cf;border:1.2px solid #222;box-sizing:border-box;"></div>
<svg style="position:absolute;left:311px;top:238px" width="7" height="8" viewBox="0 0 7 8"><rect x="0.5" y="0.5" width="6" height="7" fill="#fff" stroke="#5a8ad0" stroke-width="0.6"/><path d="M1.5 6 L5.5 2 M1.5 2 L5.5 6" stroke="#e05050" stroke-width="0.9"/></svg>
<div style="position:absolute;left:293px;top:286px;width:607px;height:8px;background:#eeeeee;border-top:1px solid #e0e0e0;box-sizing:border-box;"></div>
<div style="position:absolute;left:293px;top:286px;width:312px;height:8px;background:#dedede;"></div>
<svg style="position:absolute;left:295px;top:288px" width="3" height="4" viewBox="0 0 3 4"><path d="M3 0 L0 2 L3 4 Z" fill="#666"/></svg>
<div style="position:absolute;left:319px;top:303px;width:581px;height:1px;background:#b8b8b8;"></div>
<div style="position:absolute;left:293px;top:308px;width:607px;height:11px;background:linear-gradient(to bottom,#dedede,#e4e4e4);"></div>
<div style="position:absolute;left:313px;top:308px;width:1px;height:11px;background:#f2f2f2;"></div>
<div style="position:absolute;left:390px;top:308px;width:1px;height:11px;background:#f2f2f2;"></div>
<div style="position:absolute;left:293px;top:329px;width:607px;height:10px;background:#e8eefa;"></div>
<div style="position:absolute;left:293px;top:349px;width:607px;height:10px;background:#e8eefa;"></div>
<span id="t0" style="position:absolute;left:32.7px;top:14.85px;height:16.90px;line-height:16.90px;font-size:13px;color:#fff;font-weight:bold;font-family:'Liberation Sans', sans-serif;white-space:nowrap;transform-origin:0 50%;transform:scaleX(0.9866);">SIPM PLM</span>
<span id="t1" style="position:absolute;left:128px;top:25.70px;height:10.40px;line-height:10.40px;font-size:8px;color:#f0f4f8;font-weight:normal;font-family:'Liberation Sans', sans-serif;white-space:nowrap;transform-origin:0 50%;transform:scaleX(1.0393);">ШБЦЫ</span>
<span id="t2" style="position:absolute;left:170.5px;top:25.70px;height:10.40px;line-height:10.40px;font-size:8px;color:#f0f4f8;font-weight:normal;font-family:'Liberation Sans', sans-serif;white-space:nowrap;transform-origin:0 50%;transform:scaleX(0.9970);">ЩЮЧД</span>
<span id="t3" style="position:absolute;left:213.7px;top:25.70px;height:10.40px;line-height:10.40px;font-size:8px;color:#f0f4f8;font-weight:normal;font-family:'Liberation Sans', sans-serif;white-space:nowrap;transform-origin:0 50%;transform:scaleX(0.9655);">ЫЭЖФ</span>
<span id="t4" style="position:absolute;left:256.6px;top:25.70px;height:10.40px;line-height:10.40px;font-size:8px;color:#f0f4f8;font-weight:normal;font-family:'Liberation Sans', sans-serif;white-space:nowrap;transform-origin:0 50%;transform:scaleX(1.1242);">ДПШБ</span>
<span id="t5" style="position:absolute;left:301px;top:25.70px;height:10.40px;line-height:10.40px;font-size:8px;color:#f0f4f8;font-weight:normal;font-family:'Liberation Sans', sans-serif;white-space:nowrap;transform-origin:0 50%;transform:scaleX(1.2276);">ФГЩ</span>
<span id="t6" style="position:absolute;left:341.8px;top:25.70px;height:10.40px;line-height:10.40px;font-size:8px;color:#f0f4f8;font-weight:normal;font-family:'Liberation Sans', sans-serif;white-space:nowrap;transform-origin:0 50%;transform:scaleX(1.1125);">БЦЫЭ</span>
<span id="t7" style="position:absolute;left:812.8px;top:1.85px;height:9.10px;line-height:9.10px;font-size:7px;color:#e8eef4;font-weight:normal;font-family:'Liberation Sans', sans-serif;white-space:nowrap;transform-origin:0 50%;transform:scaleX(0.7282);">ЖШ, admin</span>
<span id="t8" style="position:absolute;left:842.5px;top:1.85px;height:9.10px;line-height:9.10px;font-size:7px;color:#a8c0d8;font-weight:normal;font-family:'Liberation Sans', sans-serif;white-space:nowrap;transform-origin:0 50%;transform:scaleX(0.8205);">|</span>
<span id="t9" style="position:absolute;left:846px;top:1.85px;height:9.10px;line-height:9.10px;font-size:7px;color:#e8eef4;font-weight:normal;font-family:'Liberation Sans', sans-serif;white-space:nowrap;transform-origin:0 50%;transform:scaleX(0.9067);">ЖШЩЫДФ,</span>
<span id="t10" style="position:absolute;left:883px;top:1.85px;height:9.10px;line-height:9.10px;font-size:7px;color:#a8c0d8;font-weight:normal;font-family:'Liberation Sans', sans-serif;white-space:nowrap;transform-origin:0 50%;transform:scaleX(0.8205);">|</span>
<span id="t11" style="position:absolute;left:886px;top:1.85px;height:9.10px;line-height:9.10px;font-size:7px;color:#e8eef4;font-weight:normal;font-family:'Liberation Sans', sans-serif;white-space:nowrap;transform-origin:0 50%;transform:scaleX(0.7392);">2021-09</span>
<span id="t12" style="position:absolute;left:862px;top:20.50px;height:10.40px;line-height:10.40px;font-size:8px;color:#eef2f6;font-weight:normal;font-family:'Liberation Sans', sans-serif;white-space:nowrap;transform-origin:0 50%;transform:scaleX(0.9121);">ЮЧ</span>
<span id="t13" style="position:absolute;left:32.5px;top:48.10px;height:10.40px;line-height:10.40px;font-size:8px;color:#dcdcdc;font-weight:normal;font-family:'Liberation Sans', sans-serif;white-space:nowrap;transform-origin:0 50%;transform:scaleX(1.0873);">ЭЖФГ</span>
<span id="t14" style="position:absolute;left:38.7px;top:62.90px;height:10.40px;line-height:10.40px;font-size:8px;color:#dcdcdc;font-weight:normal;font-family:'Liberation Sans', sans-serif;white-space:nowrap;transform-origin:0 50%;transform:scaleX(1.0140);">ПШБ</span>
<span id="t15" style="position:absolute;left:38.7px;top:76.80px;height:10.40px;line-height:10.40px;font-size:8px;color:#dcdcdc;font-weight:normal;font-family:'Liberation Sans', sans-serif;white-space:nowrap;transform-origin:0 50%;transform:scaleX(1.0623);">ГЩЮЧД</span>
<span id="t16" style="position:absolute;left:38.7px;top:91.10px;height:10.40px;line-height:10.40px;font-size:8px;color:#dcdcdc;font-weight:normal;font-family:'Liberation Sans', sans-serif;white-space:nowrap;transform-origin:0 50%;transform:scaleX(1.0054);">ЦЫЭЖФ</span>
<span id="t17" style="position:absolute;left:38.7px;top:105.20px;height:10.40px;line-height:10.40px;font-size:8px;color:#dcdcdc;font-weight:normal;font-family:'Liberation Sans', sans-serif;white-space:nowrap;transform-origin:0 50%;transform:scaleX(1.1102);">ЧДПШБ</span>
<span id="t18" style="position:absolute;left:38.7px;top:119.10px;height:10.40px;line-height:10.40px;font-size:8px;color:#dcdcdc;font-weight:normal;font-family:'Liberation Sans', sans-serif;white-space:nowrap;transform-origin:0 50%;transform:scaleX(1.0390);">ЖФГЩ</span>
<span id="t19" style="position:absolute;left:38.7px;top:133.10px;height:10.40px;line-height:10.40px;font-size:8px;color:#dcdcdc;font-weight:normal;font-family:'Liberation Sans', sans-serif;white-space:nowrap;transform-origin:0 50%;transform:scaleX(1.0175);">ШБЦЫЭЖ</span>
<span id="t20" style="position:absolute;left:38.7px;top:147.95px;height:9.10px;line-height:9.10px;font-size:7px;color:#e8a020;font-weight:bold;font-family:'Liberation Sans', sans-serif;white-space:nowrap;transform-origin:0 50%;transform:scaleX(0.8748);">ЖШCMP</span>
<span id="t21" style="position:absolute;left:38.7px;top:162.45px;height:9.10px;line-height:9.10px;font-size:7px;color:#c8c8c8;font-weight:normal;font-family:'Liberation Sans', sans-serif;white-space:nowrap;transform-origin:0 50%;transform:scaleX(0.8872);">SolidWorks</span>
<span id="t22" style="position:absolute;left:38.7px;top:175.50px;height:10.40px;line-height:10.40px;font-size:8px;color:#dcdcdc;font-weight:normal;font-family:'Liberation Sans', sans-serif;white-space:nowrap;transform-origin:0 50%;transform:scaleX(0.9821);">ЫЭЖФГЩЮ</span>
<span id="t23" style="position:absolute;left:38.7px;top:189.30px;height:10.40px;line-height:10.40px;font-size:8px;color:#dcdcdc;font-weight:normal;font-family:'Liberation Sans', sans-serif;white-space:nowrap;transform-origin:0 50%;transform:scaleX(1.0886);">ДПШБЦ</span>
<span id="t24" style="position:absolute;left:32.5px;top:204.70px;height:10.40px;line-height:10.40px;font-size:8px;color:#dcdcdc;font-weight:normal;font-family:'Liberation Sans', sans-serif;white-space:nowrap;transform-origin:0 50%;transform:scaleX(0.8269);">ФГЩЮ</span>
<span id="t25" style="position:absolute;left:32.5px;top:218.70px;height:10.40px;line-height:10.40px;font-size:8px;color:#dcdcdc;font-weight:normal;font-family:'Liberation Sans', sans-serif;white-space:nowrap;transform-origin:0 50%;transform:scaleX(0.8958);">БЦЫЭ</span>
<span id="t26" style="position:absolute;left:32.5px;top:232.10px;height:10.40px;line-height:10.40px;font-size:8px;color:#dcdcdc;font-weight:normal;font-family:'Liberation Sans', sans-serif;white-space:nowrap;transform-origin:0 50%;transform:scaleX(0.9420);">ЮЧД</span>
<span id="t27" style="position:absolute;left:214px;top:40.65px;height:11.70px;line-height:11.70px;font-size:9px;color:#333;font-weight:bold;font-family:'Liberation Sans', sans-serif;white-space:nowrap;transform-origin:0 50%;transform:scaleX(0.9969);">«</span>
<span id="t28" style="position:absolute;left:142.1px;top:68.50px;height:10.40px;line-height:10.40px;font-size:8px;color:#111;font-weight:bold;font-family:'Liberation Sans', sans-serif;white-space:nowrap;transform-origin:0 50%;transform:scaleX(0.7511);">ЩЮЧДПШ</span>
<span id="t29" style="position:absolute;left:144.8px;top:79.10px;height:10.40px;line-height:10.40px;font-size:8px;color:#1a2ad8;font-weight:normal;font-family:'Liberation Sans', sans-serif;white-space:nowrap;transform-origin:0 50%;transform:scaleX(0.9838);">ШБЦ</span>
<span id="t30" style="position:absolute;left:235.5px;top:41.50px;height:10.40px;line-height:10.40px;font-size:8px;color:#a8a8a8;font-weight:normal;font-family:'Liberation Sans', sans-serif;white-space:nowrap;transform-origin:0 50%;transform:scaleX(0.9343);">ЫЭ</span>
<span id="t31" style="position:absolute;left:263px;top:42.15px;height:9.10px;line-height:9.10px;font-size:7px;color:#a8a8a8;font-weight:normal;font-family:'Liberation Sans', sans-serif;white-space:nowrap;transform-origin:0 50%;transform:scaleX(0.9390);">Delete</span>
<span id="t32" style="position:absolute;left:295px;top:41.50px;height:10.40px;line-height:10.40px;font-size:8px;color:#222;font-weight:normal;font-family:'Liberation Sans', sans-serif;white-space:nowrap;transform-origin:0 50%;transform:scaleX(0.9730);">ДПШ</span>
<span id="t33" style="position:absolute;left:334px;top:41.50px;height:10.40px;line-height:10.40px;font-size:8px;color:#222;font-weight:normal;font-family:'Liberation Sans', sans-serif;white-space:nowrap;transform-origin:0 50%;transform:scaleX(1.1514);">ФГ</span>
<span id="t34" style="position:absolute;left:351px;top:41.50px;height:10.40px;line-height:10.40px;font-size:8px;color:#222;font-weight:normal;font-family:'Liberation Sans', sans-serif;white-space:nowrap;transform-origin:0 50%;transform:scaleX(0.8998);">(БЦЫЭ</span>
<span id="t35" style="position:absolute;left:315px;top:54.10px;height:10.40px;line-height:10.40px;font-size:8px;color:#9a9a9a;font-weight:normal;font-family:'Liberation Sans', sans-serif;white-space:nowrap;transform-origin:0 50%;transform:scaleX(1.1304);">ЮЧД</span>
<span id="t36" style="position:absolute;left:348px;top:54.10px;height:10.40px;line-height:10.40px;font-size:8px;color:#9a9a9a;font-weight:normal;font-family:'Liberation Sans', sans-serif;white-space:nowrap;transform-origin:0 50%;transform:scaleX(0.9412);">ЭЖФ</span>
<span id="t37" style="position:absolute;left:294.7px;top:68.30px;height:10.40px;line-height:10.40px;font-size:8px;color:#000;font-weight:normal;font-family:'Liberation Sans', sans-serif;white-space:nowrap;transform-origin:0 50%;transform:scaleX(0.9211);">ШБ</span>
<span id="t38" style="position:absolute;left:323.8px;top:68.30px;height:10.40px;line-height:10.40px;font-size:8px;color:#000;font-weight:normal;font-family:'Liberation Sans', sans-serif;white-space:nowrap;transform-origin:0 50%;transform:scaleX(0.9280);">ЩЮЧД</span>
<span id="t39" style="position:absolute;left:385.5px;top:68.30px;height:10.40px;line-height:10.40px;font-size:8px;color:#000;font-weight:normal;font-family:'Liberation Sans', sans-serif;white-space:nowrap;transform-origin:0 50%;transform:scaleX(0.9109);">ЫЭ</span>
<span id="t40" style="position:absolute;left:455.8px;top:68.30px;height:10.40px;line-height:10.40px;font-size:8px;color:#000;font-weight:normal;font-family:'Liberation Sans', sans-serif;white-space:nowrap;transform-origin:0 50%;transform:scaleX(1.0473);">ДП</span>
<span id="t41" style="position:absolute;left:530px;top:68.30px;height:10.40px;line-height:10.40px;font-size:8px;color:#000;font-weight:normal;font-family:'Liberation Sans', sans-serif;white-space:nowrap;transform-origin:0 50%;transform:scaleX(0.9308);">ФГЩЮ</span>
<span id="t42" style="position:absolute;left:591px;top:68.30px;height:10.40px;line-height:10.40px;font-size:8px;color:#000;font-weight:normal;font-family:'Liberation Sans', sans-serif;white-space:nowrap;transform-origin:0 50%;transform:scaleX(1.0208);">БЦЫЭ</span>
<span id="t43" style="position:absolute;left:640px;top:68.30px;height:10.40px;line-height:10.40px;font-size:8px;color:#000;font-weight:normal;font-family:'Liberation Sans', sans-serif;white-space:nowrap;transform-origin:0 50%;transform:scaleX(1.0482);">ЮЧДП</span>
<span id="t44" style="position:absolute;left:706.7px;top:68.30px;height:10.40px;line-height:10.40px;font-size:8px;color:#000;font-weight:normal;font-family:'Liberation Sans', sans-serif;white-space:nowrap;transform-origin:0 50%;transform:scaleX(0.9428);">ЭЖ</span>
<span id="t45" style="position:absolute;left:767.8px;top:68.30px;height:10.40px;line-height:10.40px;font-size:8px;color:#000;font-weight:normal;font-family:'Liberation Sans', sans-serif;white-space:nowrap;transform-origin:0 50%;transform:scaleX(0.9317);">ПШ</span>
<span id="t46" style="position:absolute;left:837.8px;top:68.30px;height:10.40px;line-height:10.40px;font-size:8px;color:#000;font-weight:normal;font-family:'Liberation Sans', sans-serif;white-space:nowrap;transform-origin:0 50%;transform:scaleX(1.0301);">ГЩ</span>
<span id="t47" style="position:absolute;left:897px;top:68.30px;height:10.40px;line-height:10.40px;font-size:8px;color:#000;font-weight:normal;font-family:'Liberation Sans', sans-serif;white-space:nowrap;transform-origin:0 50%;transform:scaleX(1.3509);">Ц</span>
<span id="t48" style="position:absolute;left:298.7px;top:79.12px;height:9.75px;line-height:9.75px;font-size:7.5px;color:#2020e0;font-weight:normal;font-family:'Liberation Sans', sans-serif;white-space:nowrap;transform-origin:0 50%;transform:scaleX(1.0067);">4</span>
<span id="t49" style="position:absolute;left:298.7px;top:89.12px;height:9.75px;line-height:9.75px;font-size:7.5px;color:#2020e0;font-weight:normal;font-family:'Liberation Sans', sans-serif;white-space:nowrap;transform-origin:0 50%;transform:scaleX(1.0067);">5</span>
<span id="t50" style="position:absolute;left:298.7px;top:99.12px;height:9.75px;line-height:9.75px;font-size:7.5px;color:#2020e0;font-weight:normal;font-family:'Liberation Sans', sans-serif;white-space:nowrap;transform-origin:0 50%;transform:scaleX(1.0067);">6</span>
<span id="t51" style="position:absolute;left:298.7px;top:109.12px;height:9.75px;line-height:9.75px;font-size:7.5px;color:#2020e0;font-weight:normal;font-family:'Liberation Sans', sans-serif;white-space:nowrap;transform-origin:0 50%;transform:scaleX(1.0067);">7</span>
<span id="t52" style="position:absolute;left:298.7px;top:119.12px;height:9.75px;line-height:9.75px;font-size:7.5px;color:#2020e0;font-weight:normal;font-family:'Liberation Sans', sans-serif;white-space:nowrap;transform-origin:0 50%;transform:scaleX(1.0067);">8</span>
<span id="t53" style="position:absolute;left:298.7px;top:129.12px;height:9.75px;line-height:9.75px;font-size:7.5px;color:#2020e0;font-weight:normal;font-family:'Liberation Sans', sans-serif;white-space:nowrap;transform-origin:0 50%;transform:scaleX(1.0067);">9</span>
<span id="t54" style="position:absolute;left:296.6px;top:139.62px;height:9.75px;line-height:9.75px;font-size:7.5px;color:#2020e0;font-weight:normal;font-family:'Liberation Sans', sans-serif;white-space:nowrap;transform-origin:0 50%;transform:scaleX(1.0067);">10</span>
<span id="t55" style="position:absolute;left:296.6px;top:150.12px;height:9.75px;line-height:9.75px;font-size:7.5px;color:#2020e0;font-weight:normal;font-family:'Liberation Sans', sans-serif;white-space:nowrap;transform-origin:0 50%;transform:scaleX(1.0774);">11</span>
<span id="t56" style="position:absolute;left:296.6px;top:160.12px;height:9.75px;line-height:9.75px;font-size:7.5px;color:#2020e0;font-weight:normal;font-family:'Liberation Sans', sans-serif;white-space:nowrap;transform-origin:0 50%;transform:scaleX(1.0067);">12</span>
<span id="t57" style="position:absolute;left:296.6px;top:170.12px;height:9.75px;line-height:9.75px;font-size:7.5px;color:#2020e0;font-weight:normal;font-family:'Liberation Sans', sans-serif;white-space:nowrap;transform-origin:0 50%;transform:scaleX(1.0067);">13</span>
<span id="t58" style="position:absolute;left:299px;top:194.90px;height:10.40px;line-height:10.40px;font-size:8px;color:#222;font-weight:normal;font-family:'Liberation Sans', sans-serif;white-space:nowrap;transform-origin:0 50%;transform:scaleX(0.9236);">ЫЭЖФ</span>
<span id="t59" style="position:absolute;left:334.9px;top:194.90px;height:10.40px;line-height:10.40px;font-size:8px;color:#222;font-weight:normal;font-family:'Liberation Sans', sans-serif;white-space:nowrap;transform-origin:0 50%;transform:scaleX(0.9936);">ДП</span>
<span id="t60" style="position:absolute;left:367px;top:194.90px;height:10.40px;line-height:10.40px;font-size:8px;color:#222;font-weight:normal;font-family:'Liberation Sans', sans-serif;white-space:nowrap;transform-origin:0 50%;transform:scaleX(1.0044);">ФГЩ</span>
<span id="t61" style="position:absolute;left:395px;top:194.90px;height:10.40px;line-height:10.40px;font-size:8px;color:#222;font-weight:normal;font-family:'Liberation Sans', sans-serif;white-space:nowrap;transform-origin:0 50%;transform:scaleX(1.1875);">(БЦЫ)</span>
<span id="t62" style="position:absolute;left:294.2px;top:206.00px;height:10.40px;line-height:10.40px;font-size:8px;color:#111;font-weight:normal;font-family:'Liberation Sans', sans-serif;white-space:nowrap;transform-origin:0 50%;transform:scaleX(0.9603);">ЮЧДПШ</span>
<span id="t63" style="position:absolute;left:322.5px;top:216.50px;height:10.40px;line-height:10.40px;font-size:8px;color:#111;font-weight:normal;font-family:'Liberation Sans', sans-serif;white-space:nowrap;transform-origin:0 50%;transform:scaleX(0.8865);">ГЩ</span>
<span id="t64" style="position:absolute;left:367.5px;top:216.50px;height:10.40px;line-height:10.40px;font-size:8px;color:#111;font-weight:normal;font-family:'Liberation Sans', sans-serif;white-space:nowrap;transform-origin:0 50%;transform:scaleX(0.8175);">ЫЭ</span>
<span id="t65" style="position:absolute;left:417.5px;top:216.50px;height:10.40px;line-height:10.40px;font-size:8px;color:#111;font-weight:normal;font-family:'Liberation Sans', sans-serif;white-space:nowrap;transform-origin:0 50%;transform:scaleX(0.9926);">ШБ</span>
<span id="t66" style="position:absolute;left:491px;top:216.50px;height:10.40px;line-height:10.40px;font-size:8px;color:#111;font-weight:normal;font-family:'Liberation Sans', sans-serif;white-space:nowrap;transform-origin:0 50%;transform:scaleX(0.9806);">ГЩЮЧ</span>
<span id="t67" style="position:absolute;left:572px;top:216.50px;height:10.40px;line-height:10.40px;font-size:8px;color:#111;font-weight:normal;font-family:'Liberation Sans', sans-serif;white-space:nowrap;transform-origin:0 50%;transform:scaleX(0.9758);">ЖФГЩ</span>
<span id="t68" style="position:absolute;left:652.7px;top:216.50px;height:10.40px;line-height:10.40px;font-size:8px;color:#111;font-weight:normal;font-family:'Liberation Sans', sans-serif;white-space:nowrap;transform-origin:0 50%;transform:scaleX(0.9548);">ЩЮЧД</span>
<span id="t69" style="position:absolute;left:730.5px;top:216.50px;height:10.40px;line-height:10.40px;font-size:8px;color:#111;font-weight:normal;font-family:'Liberation Sans', sans-serif;white-space:nowrap;transform-origin:0 50%;transform:scaleX(0.9269);">ЩЮЧДП</span>
<span id="t70" style="position:absolute;left:794px;top:216.50px;height:10.40px;line-height:10.40px;font-size:8px;color:#111;font-weight:normal;font-family:'Liberation Sans', sans-serif;white-space:nowrap;transform-origin:0 50%;transform:scaleX(0.9768);">ШБЦЫ</span>
<span id="t71" style="position:absolute;left:844px;top:216.50px;height:10.40px;line-height:10.40px;font-size:8px;color:#111;font-weight:normal;font-family:'Liberation Sans', sans-serif;white-space:nowrap;transform-origin:0 50%;transform:scaleX(1.0485);">ЧДПШ</span>
<span id="t72" style="position:absolute;left:311.4px;top:227.65px;height:9.10px;line-height:9.10px;font-size:7px;color:#2424d8;font-weight:normal;font-family:'Liberation Sans', sans-serif;white-space:nowrap;transform-origin:0 50%;transform:scaleX(0.8332);">WXZG-GC-000471</span>
<span id="t73" style="position:absolute;left:370.5px;top:227.65px;height:9.10px;line-height:9.10px;font-size:7px;color:#b0b8d0;font-weight:normal;font-family:'Liberation Sans', sans-serif;white-space:nowrap;transform-origin:0 50%;transform:scaleX(0.7680);">1</span>
<span id="t74" style="position:absolute;left:384px;top:227.00px;height:10.40px;line-height:10.40px;font-size:8px;color:#2424d8;font-weight:normal;font-family:'Liberation Sans', sans-serif;white-space:nowrap;transform-origin:0 50%;transform:scaleX(0.8019);">ЫЭ.pdf</span>
<span id="t75" style="position:absolute;left:464.4px;top:227.00px;height:10.40px;line-height:10.40px;font-size:8px;color:#2424d8;font-weight:normal;font-family:'Liberation Sans', sans-serif;white-space:nowrap;transform-origin:0 50%;transform:scaleX(0.8158);">ДП.pdf</span>
<span id="t76" style="position:absolute;left:786.5px;top:227.00px;height:10.40px;line-height:10.40px;font-size:8px;color:#2424d8;font-weight:normal;font-family:'Liberation Sans', sans-serif;white-space:nowrap;transform-origin:0 50%;transform:scaleX(1.0323);">ФГЩ</span>
<span id="t77" style="position:absolute;left:319px;top:238.15px;height:9.10px;line-height:9.10px;font-size:7px;color:#a0a0a0;font-weight:normal;font-family:'Liberation Sans', sans-serif;white-space:nowrap;transform-origin:0 50%;transform:scaleX(0.8109);">201340011</span>
<span id="t78" style="position:absolute;left:370.5px;top:238.15px;height:9.10px;line-height:9.10px;font-size:7px;color:#a0a0a0;font-weight:normal;font-family:'Liberation Sans', sans-serif;white-space:nowrap;transform-origin:0 50%;transform:scaleX(0.7680);">2</span>
<span id="t79" style="position:absolute;left:384px;top:237.50px;height:10.40px;line-height:10.40px;font-size:8px;color:#a8a8a8;font-weight:normal;font-family:'Liberation Sans', sans-serif;white-space:nowrap;transform-origin:0 50%;transform:scaleX(1.0741);">БЦ</span>
<span id="t80" style="position:absolute;left:626px;top:237.50px;height:10.40px;line-height:10.40px;font-size:8px;color:#8a8a8a;font-weight:normal;font-family:'Liberation Sans', sans-serif;white-space:nowrap;transform-origin:0 50%;transform:scaleX(0.8489);">WXPH01-1ШБ.dwg</span>
<span id="t81" style="position:absolute;left:887.6px;top:238.15px;height:9.10px;line-height:9.10px;font-size:7px;color:#8a8a8a;font-weight:normal;font-family:'Liberation Sans', sans-serif;white-space:nowrap;transform-origin:0 50%;transform:scaleX(1.0978);">A3</span>
<span id="t82" style="position:absolute;left:294px;top:300.00px;height:10.40px;line-height:10.40px;font-size:8px;color:#111;font-weight:normal;font-family:'Liberation Sans', sans-serif;white-space:nowrap;transform-origin:0 50%;transform:scaleX(0.9897);">ПШБЦ</span>
<span id="t83" style="position:absolute;left:294px;top:309.30px;height:10.40px;line-height:10.40px;font-size:8px;color:#111;font-weight:normal;font-family:'Liberation Sans', sans-serif;white-space:nowrap;transform-origin:0 50%;transform:scaleX(0.9529);">ШБ</span>
<span id="t84" style="position:absolute;left:346px;top:309.30px;height:10.40px;line-height:10.40px;font-size:8px;color:#111;font-weight:normal;font-family:'Liberation Sans', sans-serif;white-space:nowrap;transform-origin:0 50%;transform:scaleX(0.5772);">ЩЮ</span>
<span id="t85" style="position:absolute;left:466.7px;top:309.30px;height:10.40px;line-height:10.40px;font-size:8px;color:#111;font-weight:normal;font-family:'Liberation Sans', sans-serif;white-space:nowrap;transform-origin:0 50%;transform:scaleX(0.9391);">ЫЭЖ</span>
<span id="t86" style="position:absolute;left:754.4px;top:309.30px;height:10.40px;line-height:10.40px;font-size:8px;color:#111;font-weight:normal;font-family:'Liberation Sans', sans-serif;white-space:nowrap;transform-origin:0 50%;transform:scaleX(0.9514);">ДПШ</span>
<span id="t87" style="position:absolute;left:300.5px;top:320.35px;height:9.10px;line-height:9.10px;font-size:7px;color:#555;font-weight:normal;font-family:'Liberation Sans', sans-serif;white-space:nowrap;transform-origin:0 50%;transform:scaleX(0.7680);">1</span>
<span id="t88" style="position:absolute;left:330px;top:320.35px;height:9.10px;line-height:9.10px;font-size:7px;color:#4a4a4a;font-weight:normal;font-family:'Liberation Sans', sans-serif;white-space:nowrap;transform-origin:0 50%;transform:scaleX(1.1267);">PDFШБЦЫ</span>
<span id="t89" style="position:absolute;left:447.8px;top:320.35px;height:9.10px;line-height:9.10px;font-size:7px;color:#2a2a3a;font-weight:normal;font-family:'Liberation Sans', sans-serif;white-space:nowrap;transform-origin:0 50%;transform:scaleX(1.0300);">WXPH01-1ФГ.pdf</span>
<span id="t90" style="position:absolute;left:300.5px;top:330.35px;height:9.10px;line-height:9.10px;font-size:7px;color:#555;font-weight:normal;font-family:'Liberation Sans', sans-serif;white-space:nowrap;transform-origin:0 50%;transform:scaleX(0.7680);">2</span>
<span id="t91" style="position:absolute;left:337px;top:330.35px;height:9.10px;line-height:9.10px;font-size:7px;color:#4a4a4a;font-weight:normal;font-family:'Liberation Sans', sans-serif;white-space:nowrap;transform-origin:0 50%;transform:scaleX(1.0959);">ЩЮЧД</span>
<span id="t92" style="position:absolute;left:451px;top:330.35px;height:9.10px;line-height:9.10px;font-size:7px;color:#2a2a3a;font-weight:normal;font-family:'Liberation Sans', sans-serif;white-space:nowrap;transform-origin:0 50%;transform:scaleX(0.8864);">2021-09-03 15:49</span>
<span id="t93" style="position:absolute;left:300.5px;top:340.35px;height:9.10px;line-height:9.10px;font-size:7px;color:#555;font-weight:normal;font-family:'Liberation Sans', sans-serif;white-space:nowrap;transform-origin:0 50%;transform:scaleX(0.7680);">3</span>
<span id="t94" style="position:absolute;left:330px;top:340.35px;height:9.10px;line-height:9.10px;font-size:7px;color:#4a4a4a;font-weight:normal;font-family:'Liberation Sans', sans-serif;white-space:nowrap;transform-origin:0 50%;transform:scaleX(1.1214);">PDFЫЭЖ...</span>
<span id="t95" style="position:absolute;left:462px;top:340.35px;height:9.10px;line-height:9.10px;font-size:7px;color:#2a2a3a;font-weight:normal;font-family:'Liberation Sans', sans-serif;white-space:nowrap;transform-origin:0 50%;transform:scaleX(0.8868);">102.22 KB</span>
<span id="t96" style="position:absolute;left:300.5px;top:350.35px;height:9.10px;line-height:9.10px;font-size:7px;color:#555;font-weight:normal;font-family:'Liberation Sans', sans-serif;white-space:nowrap;transform-origin:0 50%;transform:scaleX(0.7680);">4</span>
<span id="t97" style="position:absolute;left:323px;top:350.35px;height:9.10px;line-height:9.10px;font-size:7px;color:#4a4a4a;font-weight:normal;font-family:'Liberation Sans', sans-serif;white-space:nowrap;transform-origin:0 50%;transform:scaleX(1.1916);">PDFДПШБЦЫ</span>
<span id="t98" style="position:absolute;left:451px;top:350.35px;height:9.10px;line-height:9.10px;font-size:7px;color:#2a2a3a;font-weight:normal;font-family:'Liberation Sans', sans-serif;white-space:nowrap;transform-origin:0 50%;transform:scaleX(0.8864);">2021-09-03 15:49</span>
</div></body></html>
